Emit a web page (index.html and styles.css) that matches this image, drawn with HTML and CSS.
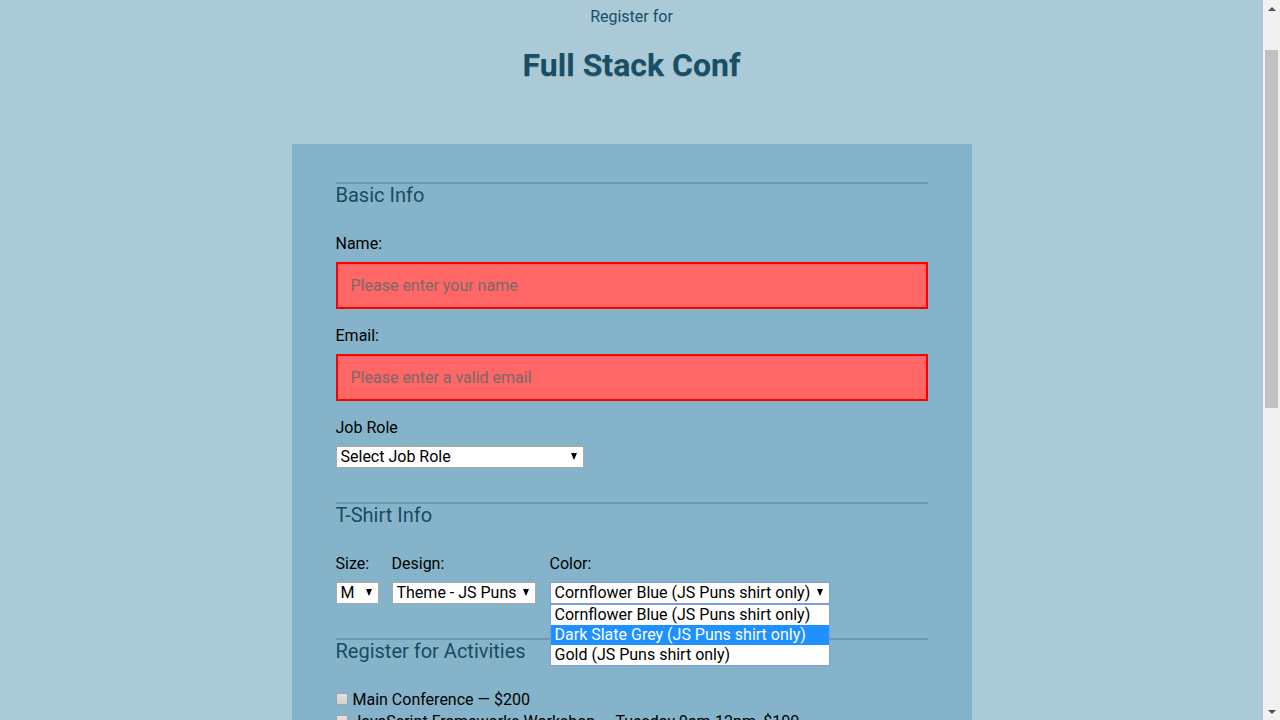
FILE: index.html
```html
<!DOCTYPE html>
<html lang="en">
<head>
<meta charset="utf-8">
<title>Full Stack Conf</title>
<link rel="stylesheet" href="styles.css">
</head>
<body>
<div class="viewport">
<header class="site-header">
  <span class="subtitle">Register for</span>
  <h1 class="title">Full Stack Conf</h1>
</header>
<main class="panel">
  <form class="reg-form">
    <fieldset class="section">
      <h2 class="legend">Basic Info</h2>
      <label class="label label-name" for="name">Name:</label>
      <input class="text-input invalid" type="text" id="name" placeholder="Please enter your name">
      <label class="label label-gap" for="mail">Email:</label>
      <input class="text-input invalid" type="email" id="mail" placeholder="Please enter a valid email">
      <label class="label label-gap" for="title">Job Role</label>
      <span class="select-wrap select-job">
        <select id="title" class="select"><option>Select Job Role</option></select>
      </span>
    </fieldset>

    <fieldset class="section section-shirt">
      <h2 class="legend">T-Shirt Info</h2>
      <div class="shirt-row">
        <div class="shirt-col">
          <label class="label label-shirt" for="size">Size:</label>
          <span class="select-wrap select-size">
            <select id="size" class="select"><option>M</option></select>
          </span>
        </div>
        <div class="shirt-col col-design">
          <label class="label label-shirt" for="design">Design:</label>
          <span class="select-wrap select-design">
            <select id="design" class="select"><option>Theme - JS Puns</option></select>
          </span>
        </div>
        <div class="shirt-col col-color">
          <label class="label label-shirt" for="color">Color:</label>
          <span class="select-wrap select-color is-open">
            <select id="color" class="select"><option>Cornflower Blue (JS Puns shirt only)</option></select>
            <ul class="dropdown">
              <li class="option">Cornflower Blue (JS Puns shirt only)</li>
              <li class="option option-active">Dark Slate Grey (JS Puns shirt only)</li>
              <li class="option">Gold (JS Puns shirt only)</li>
            </ul>
          </span>
        </div>
      </div>
    </fieldset>

    <fieldset class="section section-activities">
      <h2 class="legend">Register for Activities</h2>
      <label class="check-row first-check"><input type="checkbox" class="check"> Main Conference — $200</label>
      <label class="check-row"><input type="checkbox" class="check"> JavaScript Frameworks Workshop — Tuesday 9am-12pm, $100</label>
      <label class="check-row"><input type="checkbox" class="check"> JavaScript Libraries Workshop — Tuesday 1pm-4pm, $100</label>
      <label class="check-row"><input type="checkbox" class="check"> Express Workshop — Tuesday 9am-12pm, $100</label>
      <label class="check-row"><input type="checkbox" class="check"> Node.js Workshop — Tuesday 1pm-4pm, $100</label>
      <label class="check-row"><input type="checkbox" class="check"> Build tools Workshop — Wednesday 9am-12pm, $100</label>
      <label class="check-row"><input type="checkbox" class="check"> npm Workshop — Wednesday 1pm-4pm, $100</label>
    </fieldset>

    <fieldset class="section section-payment">
      <h2 class="legend">Payment Info</h2>
      <label class="label label-name" for="payment">I'm going to pay with:</label>
      <span class="select-wrap select-job">
        <select id="payment" class="select"><option>Credit Card</option></select>
      </span>
      <div class="cc-row">
        <div class="cc-col cc-num">
          <label class="label label-shirt" for="cc-num">Card Number:</label>
          <input class="text-input small" type="text" id="cc-num">
        </div>
        <div class="cc-col cc-zip">
          <label class="label label-shirt" for="zip">Zip Code:</label>
          <input class="text-input small" type="text" id="zip">
        </div>
        <div class="cc-col cc-cvv">
          <label class="label label-shirt" for="cvv">CVV:</label>
          <input class="text-input small" type="text" id="cvv">
        </div>
      </div>
    </fieldset>

    <button type="button" class="submit">Register</button>
  </form>
</main>
</div>
<div class="scrollbar" aria-hidden="true">
  <div class="sb-btn"><span class="sb-arrow-up"></span></div>
  <div class="sb-track"><div class="sb-thumb"></div></div>
  <div class="sb-btn"><span class="sb-arrow-down"></span></div>
</div>
</body>
</html>
```

FILE: styles.css
```css
* { box-sizing: border-box; }

html, body {
  margin: 0;
  padding: 0;
  height: 100%;
  overflow: hidden;
}

body {
  display: flex;
  background: #abcad7;
  font-family: Roboto, "Liberation Sans", sans-serif;
  color: #000;
}

.viewport {
  flex: 1;
  height: 100vh;
  overflow: hidden;
}

/* classic scrollbar */
.scrollbar {
  width: 17px;
  height: 100vh;
  flex: none;
  display: flex;
  flex-direction: column;
  background: #f1f1f1;
}

.sb-btn {
  height: 17px;
  flex: none;
  display: flex;
  align-items: center;
  justify-content: center;
}

.sb-arrow-up,
.sb-arrow-down {
  width: 0;
  height: 0;
  border-left: 4px solid transparent;
  border-right: 4px solid transparent;
}

.sb-arrow-up { border-bottom: 4px solid #505050; }
.sb-arrow-down { border-top: 4px solid #505050; }

.sb-track {
  flex: 1;
  padding: 33px 2px 0;
}

.sb-thumb {
  height: 358px;
  background: #c1c1c1;
}

.site-header {
  text-align: center;
  color: #184f68;
  padding-top: 7px;
  height: 144px;
}

.subtitle {
  display: block;
  font-size: 16px;
  font-weight: 400;
  line-height: 20px;
}

.title {
  margin: 19px 0 0;
  font-size: 32px;
  font-weight: 700;
  line-height: 38px;
  text-shadow: 0 1px 0 rgba(120, 100, 60, 0.35);
}

.panel {
  width: 680px;
  margin: 0 auto;
  background: #85b4ca;
  padding: 38px 44px 120px;
}

.reg-form {
  display: flex;
  flex-direction: column;
}

.section {
  border: 0;
  border-top: 2px solid #6698b0;
  margin: 0;
  padding: 0;
  display: flex;
  flex-direction: column;
  align-items: flex-start;
}

.section-shirt { margin-top: 34px; }
.section-activities { margin-top: 34px; }
.section-payment { margin-top: 34px; }

.legend {
  margin: 0;
  font-size: 20px;
  font-weight: 400;
  line-height: 22px;
  color: #174b63;
}

.label {
  display: block;
  font-size: 16px;
  line-height: 20px;
}

.label-name { margin-top: 28px; }
.label-gap { margin-top: 17px; }
.label-shirt { margin-top: 0; }

.text-input {
  display: block;
  width: 100%;
  height: 47px;
  margin-top: 8px;
  padding: 0 13px;
  border: 2px solid #a0bccb;
  background: #c1deeb;
  font-family: Roboto, "Liberation Sans", sans-serif;
  font-size: 16px;
  color: #184f68;
  outline: none;
}

.text-input.invalid {
  background: #ff6666;
  border-color: #ff0000;
}

.text-input.invalid::placeholder {
  color: #786a6a;
  opacity: 1;
}

.text-input.small {
  height: 40px;
  margin-top: 8px;
}

.select-wrap {
  position: relative;
  display: inline-block;
  margin-top: 8px;
}

.select {
  display: block;
  appearance: none;
  -webkit-appearance: none;
  height: 22px;
  width: 100%;
  margin: 0;
  padding: 0 16px 0 4px;
  border: 1px solid #a9a9a9;
  border-radius: 0;
  background: #fff;
  font-family: Roboto, "Liberation Sans", sans-serif;
  font-size: 16px;
  line-height: 20px;
  color: #000;
}

.select-wrap::after {
  content: "";
  position: absolute;
  right: 7px;
  top: 7px;
  width: 0;
  height: 0;
  border-left: 3px solid transparent;
  border-right: 3px solid transparent;
  border-top: 7px solid #000;
  pointer-events: none;
}

.select-job { width: 248px; }
.select-size { width: 43px; }
.select-design { width: 144px; }
.select-color { width: 280px; }

.select-color .select {
  border-color: #7b9ee3;
}

.shirt-row {
  display: flex;
  margin-top: 28px;
}

.shirt-col {
  display: flex;
  flex-direction: column;
  align-items: flex-start;
}

.col-design { margin-left: 13px; }
.col-color { margin-left: 14px; }

.dropdown {
  position: absolute;
  left: 0;
  top: 22px;
  width: 280px;
  margin: 0;
  padding: 0;
  list-style: none;
  background: #fff;
  border: 1px solid #7b9ee3;
  z-index: 10;
}

.option {
  height: 20px;
  line-height: 20px;
  padding-left: 4px;
  font-size: 16px;
  color: #000;
  white-space: nowrap;
}

.option-active {
  background: #1e90ff;
  color: #fff;
}

.check-row {
  display: flex;
  align-items: center;
  font-size: 16px;
  line-height: 22px;
  color: #000;
}

.first-check { margin-top: 27px; }

.check {
  appearance: none;
  -webkit-appearance: none;
  width: 12px;
  height: 12px;
  margin: 0 5px 3px 0;
  border: 1px solid #a3a3a3;
  border-radius: 2px;
  background: linear-gradient(#e2e2e2, #d2d2d2);
}

.cc-row {
  display: flex;
  gap: 14px;
  width: 100%;
  margin-top: 28px;
}

.cc-col { display: flex; flex-direction: column; }
.cc-num { flex: 3; }
.cc-zip { flex: 1.4; }
.cc-cvv { flex: 1; }

.submit {
  align-self: flex-start;
  margin-top: 40px;
  padding: 12px 28px;
  border: 0;
  border-radius: 4px;
  background: #22627e;
  color: #fff;
  font-family: Roboto, "Liberation Sans", sans-serif;
  font-size: 18px;
}
```
